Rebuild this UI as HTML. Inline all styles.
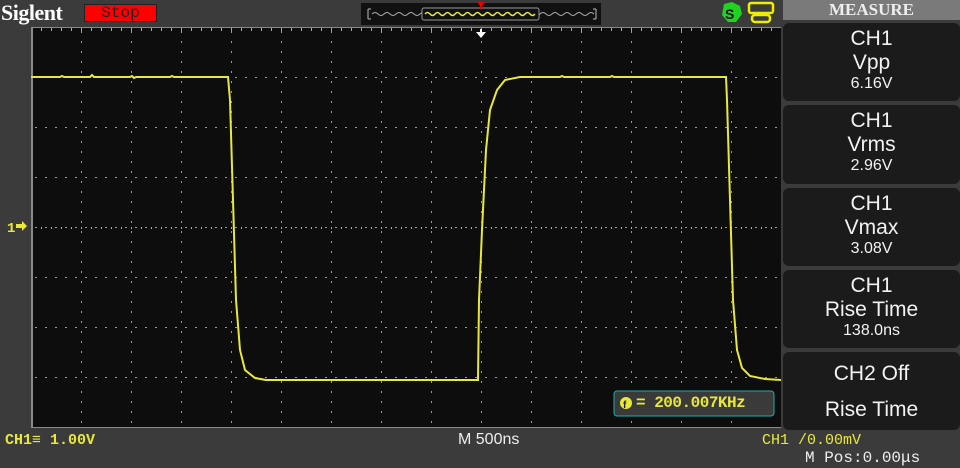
<!DOCTYPE html>
<html><head><meta charset="utf-8"><style>
body{margin:0;width:960px;height:468px;background:#3b3b3b;overflow:hidden;position:relative;font-family:"Liberation Sans",sans-serif}
.box{position:absolute;left:783px;width:177px;background:#1b1b1b;border-radius:6px;color:#f2f2f2;text-align:center}
.big{font-size:21px;line-height:24px}
.sm{font-size:16px;line-height:18px}
.y{color:#e8e83a;font-family:"Liberation Mono",monospace;font-weight:bold;position:absolute;font-size:15px}
</style></head><body>
<div style="position:absolute;left:1px;top:0px;font-family:'Liberation Serif',serif;font-weight:bold;font-size:22px;color:#fff;letter-spacing:-0.5px">Siglent</div>
<div style="position:absolute;left:84px;top:4px;width:73px;height:18px;background:#f00;border:1px solid #222;box-sizing:border-box;color:#222;font-size:16px;line-height:17px;text-align:center;font-family:'Liberation Mono',monospace">Stop</div>
<svg style="position:absolute;left:0;top:0" width="960" height="468">
<defs>
<pattern id="vd" patternUnits="userSpaceOnUse" x="31" y="27" width="50" height="10"><rect x="-1" y="4" width="2" height="2" fill="#9a9a9a"/></pattern>
<pattern id="hd" patternUnits="userSpaceOnUse" x="31" y="27" width="10" height="50"><rect x="4" y="-1" width="2" height="2" fill="#9a9a9a"/></pattern>
<pattern id="tk" patternUnits="userSpaceOnUse" x="31" y="27" width="10" height="10"><rect x="0" y="0" width="1" height="4" fill="#aaa"/></pattern>
</defs>
<rect x="361" y="3" width="240" height="22" fill="#111"/>
<path d="M368 9v10M368 9h3M368 19h3M596 9v10M596 9h-3M596 19h-3" stroke="#bbb" fill="none"/>
<path d="M372 14 q3 -3 6 0 t6 0 t6 0 t6 0 t6 0 t6 0 t6 0 t6 0 t6 0 t6 0 t6 0 t6 0 t6 0 t6 0 t6 0 t6 0 t6 0 t6 0 t6 0 t6 0 t6 0 t6 0 t6 0 t6 0 t6 0 t6 0 t6 0 t6 0 t6 0 t6 0 t6 0 t6 0 t6 0 t6 0 t6 0 t6 0 t6 0" stroke="#aaa" fill="none"/>
<rect x="422" y="8" width="117" height="12" rx="2" fill="#111" stroke="#999"/>
<path d="M425 14 q2.5 -3 5 0 t5 0 t5 0 t5 0 t5 0 t5 0 t5 0 t5 0 t5 0 t5 0 t5 0 t5 0 t5 0 t5 0 t5 0 t5 0 t5 0 t5 0 t5 0 t5 0 t5 0 t5 0" stroke="#e8e83a" stroke-width="1.5" fill="none"/>
<path d="M477 2h8l-4 5z M480 5h2v4h-2z" fill="#e00"/>
<path d="M724 4l8 -2 8 4 2 8 -6 8 -8 0 -6 -7z" fill="#1fd31f"/>
<text x="725" y="19" font-size="14" font-weight="bold" fill="#111" font-family="Liberation Sans">S</text>
<rect x="749" y="3" width="24" height="10" rx="2" fill="none" stroke="#ee0" stroke-width="2.5"/>
<rect x="752" y="15" width="18" height="7" rx="3" fill="none" stroke="#ee0" stroke-width="2.5"/>
<rect x="31" y="27" width="750" height="401" fill="#0d0d0d"/>
<rect x="31" y="27" width="750" height="401" fill="url(#vd)"/>
<rect x="31" y="27" width="750" height="401" fill="url(#hd)"/>
<rect x="31" y="27" width="750" height="4" fill="url(#tk)"/>
<rect x="31" y="424" width="750" height="4" fill="url(#tk)"/>
<rect x="31" y="225" width="750" height="4" fill="url(#tk)"/>
<rect x="31" y="27" width="2" height="401" fill="#8a8a8a"/>
<rect x="31" y="27" width="750" height="1" fill="#8a8a8a"/>
<rect x="31" y="427" width="750" height="1" fill="#8a8a8a"/>
<path d="M476 32h10l-5 6z M480 29h2v5h-2z" fill="#fff"/>
<path d="M31 77H60L62 76L64 77H90L92 75L94 77H130L132 76L134 78L136 77H170L172 76L174 77H228L230 100L233 200L236 300L240 350L245 370L255 378L266 380H478L479 300L482 230L486 150L490 110L497 90L505 80L520 77H560L562 76L564 77H610L612 76L614 77H726L727 100L730 200L733 300L737 350L742 368L750 376L765 379L781 380" stroke="#e8e83a" stroke-width="2" fill="none"/>
<path d="M16 224h6v-3l5 5-5 5v-3h-6z" fill="#e8e83a"/>
<text x="7" y="232" fill="#e8e83a" font-size="14" font-weight="bold" font-family="Liberation Mono">1</text>
<rect x="614" y="391" width="160" height="25" rx="3" fill="#3a3a3a" stroke="#2aa" stroke-width="1"/>
<circle cx="626" cy="403" r="6" fill="#e8e83a"/>
<text x="623" y="408" font-size="10" font-weight="bold" fill="#222">f</text>
</svg>
<div class="y" style="left:636px;top:394px;font-size:16px;letter-spacing:-0.5px">= 200.007KHz</div>
<div style="position:absolute;left:783px;top:0;width:177px;height:20px;background:#7a7a7a;color:#eee;font-family:'Liberation Serif',serif;font-weight:bold;font-size:17px;text-align:center;line-height:20px">MEASURE</div>
<div class="box" style="top:23px;height:78px"><div class="big" style="margin-top:4px">CH1</div><div class="big">Vpp</div><div class="sm">6.16V</div></div>
<div class="box" style="top:105px;height:79px"><div class="big" style="margin-top:4px">CH1</div><div class="big">Vrms</div><div class="sm">2.96V</div></div>
<div class="box" style="top:188px;height:78px"><div class="big" style="margin-top:4px">CH1</div><div class="big">Vmax</div><div class="sm">3.08V</div></div>
<div class="box" style="top:270px;height:78px"><div class="big" style="margin-top:4px">CH1</div><div class="big">Rise Time</div><div class="sm">138.0ns</div></div>
<div class="box" style="top:352px;height:78px"><div class="big" style="margin-top:10px">CH2 Off</div><div class="big" style="margin-top:12px">Rise Time</div></div>
<div class="y" style="left:5px;top:432px">CH1&#8801; 1.00V</div>
<div style="position:absolute;left:458px;top:431px;color:#eee;font-size:16px">M 500ns</div>
<div class="y" style="left:762px;top:432px;font-weight:normal">CH1 /0.00mV</div>
<div style="position:absolute;left:805px;top:449px;color:#eee;font-size:16px;font-family:'Liberation Mono',monospace">M Pos:0.00&#956;s</div>
</body></html>
